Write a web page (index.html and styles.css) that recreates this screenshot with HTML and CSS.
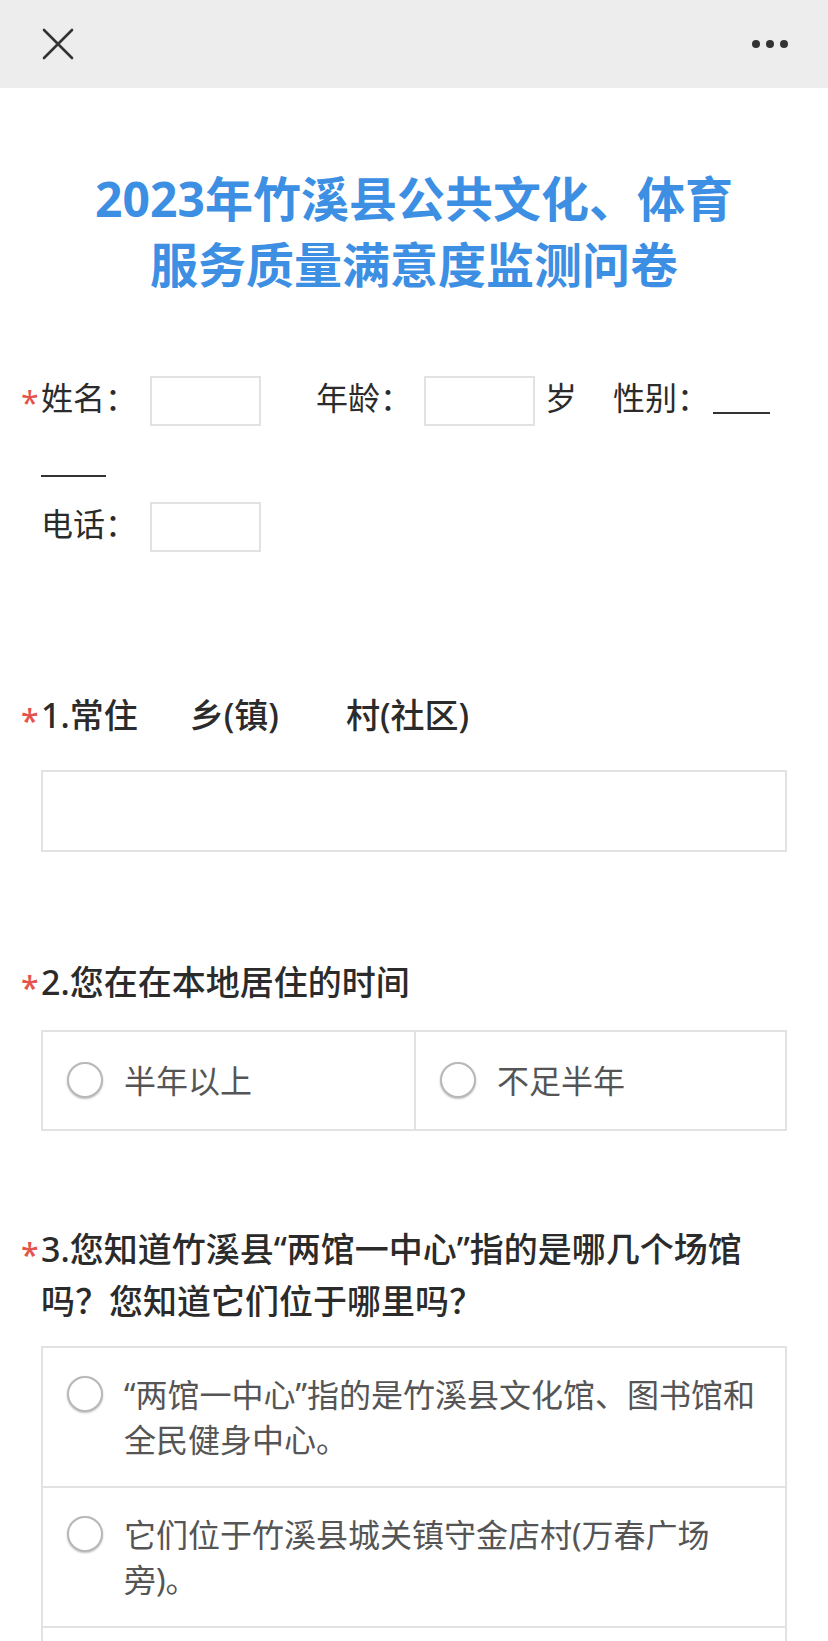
FILE: index.html
```html
<!DOCTYPE html>
<html lang="zh-CN">
<head>
  <meta charset="UTF-8">
  <meta name="viewport" content="width=device-width, initial-scale=1.0">
  <title>2023年竹溪县公共文化、体育服务质量满意度监测问卷</title>
  <link rel="stylesheet" href="styles.css">
</head>
<body>
  <header class="topbar">
    <button class="icon-btn close-btn" aria-label="关闭">
      <svg width="32" height="32" viewBox="0 0 32 32">
        <path d="M2 2 L30 30 M30 2 L2 30" stroke="#333" stroke-width="2.6" stroke-linecap="round" fill="none"/>
      </svg>
    </button>
    <button class="icon-btn more-btn" aria-label="更多">
      <span class="dot"></span><span class="dot"></span><span class="dot"></span>
    </button>
  </header>

  <main class="page">
    <h1 class="survey-title">2023年竹溪县公共文化、体育<br>服务质量满意度监测问卷</h1>

    <div class="info">
      <span class="req">*</span>姓名：<span class="field"></span><span class="gap-lg">年龄：</span><span class="field field-age"></span><span class="unit">岁</span><span class="gap-md">性别：</span><span class="blank blank-a"></span><br><span class="blank blank-b"></span><br>电话：<span class="field"></span>
    </div>

    <section class="question q-first">
      <div class="q-title"><span class="req">*</span>1.常住<span class="spacer spacer-a"></span>乡(镇)<span class="spacer spacer-b"></span>村(社区)</div>
      <div class="text-input"></div>
    </section>

    <section class="question q-second">
      <div class="q-title"><span class="req">*</span>2.您在在本地居住的时间</div>
      <div class="options options-row">
        <label class="option"><span class="radio"></span><span class="option-text">半年以上</span></label>
        <label class="option"><span class="radio"></span><span class="option-text">不足半年</span></label>
      </div>
    </section>

    <section class="question q-third">
      <div class="q-title"><span class="req">*</span>3.您知道竹溪县“两馆一中心”指的是哪几个场馆吗？您知道它们位于哪里吗？</div>
      <div class="options options-col">
        <label class="option"><span class="radio"></span><span class="option-text">“两馆一中心”指的是竹溪县文化馆、图书馆和全民健身中心。</span></label>
        <label class="option"><span class="radio"></span><span class="option-text">它们位于竹溪县城关镇守金店村(万春广场旁)。</span></label>
        <label class="option option-empty"><span class="radio"></span></label>
      </div>
    </section>
  </main>
</body>
</html>
```

FILE: styles.css
```css
:root {
  --text-color: #2b2b2b;
  --option-color: #555;
  --title-color: #3c8fe3;
  --border-color: #e2e2e2;
  --req-color: #e5534b;
  --font-family: "Noto Sans", "Noto Sans CJK SC", sans-serif;
}

html, body { margin: 0; padding: 0; }
body {
  font-family: var(--font-family);
  color: var(--text-color);
  background: #fff;
}

.topbar {
  height: 88px;
  background: #ededed;
  display: flex;
  align-items: center;
  justify-content: space-between;
  padding: 0 40px 0 42px;
}

.icon-btn {
  border: 0;
  background: none;
  padding: 0;
  display: flex;
  align-items: center;
}
.more-btn { gap: 6px; }
.dot {
  width: 8px;
  height: 8px;
  border-radius: 50%;
  background: #333;
}

.page { padding: 0 41px 40px; }

.survey-title {
  margin: 78px 0 0;
  font-size: 48px;
  line-height: 66px;
  font-weight: 700;
  text-align: center;
  color: var(--title-color);
}

.info {
  margin-top: 68px;
  font-size: 32px;
  line-height: 63px;
  color: var(--text-color);
}
.field {
  display: inline-block;
  width: 107px;
  height: 46px;
  border: 2px solid var(--border-color);
  vertical-align: middle;
  margin-left: 13px;
}
.field-age { margin-left: 12px; }
.gap-lg { margin-left: 55px; }
.unit { margin-left: 10px; }
.gap-md { margin-left: 36px; }
.blank {
  display: inline-block;
  height: 0;
  border-bottom: 2px solid #333;
  vertical-align: -4px;
}
.blank-a { width: 57px; margin-left: 4px; }
.blank-b { width: 65px; }

.req {
  display: inline-block;
  width: 20px;
  margin-left: -20px;
  color: var(--req-color);
  font-size: 32px;
  vertical-align: -5px;
  line-height: 1;
}

.question { margin-top: 100px; }
.q-first { margin-top: 134px; }
.q-second { margin-top: 104px; }
.q-third { margin-top: 92px; }

.q-title {
  font-size: 34px;
  line-height: 52px;
  font-weight: 500;
  color: var(--text-color);
  padding-right: 22px;
}
.spacer { display: inline-block; }
.spacer-a { width: 52px; }
.spacer-b { width: 67px; }

.text-input {
  margin-top: 29px;
  height: 78px;
  border: 2px solid var(--border-color);
}

.options {
  margin-top: 19px;
  border: 2px solid var(--border-color);
}
.q-second .options { margin-top: 22px; }
.options-row { display: grid; grid-template-columns: 1fr 1fr; }
.options-row .option { padding-top: 26px; padding-bottom: 26px; }
.options-row .option + .option { border-left: 2px solid var(--border-color); }
.options-col { display: flex; flex-direction: column; }
.options-col .option + .option { border-top: 2px solid var(--border-color); }

.option {
  display: flex;
  align-items: flex-start;
  padding: 24px 14px 24px 24px;
  font-size: 32px;
  line-height: 45px;
  color: var(--option-color);
}
.option-empty { min-height: 45px; }
.radio {
  flex: none;
  width: 32px;
  height: 32px;
  margin: 4px 21px 0 0;
  border: 2px solid #b8b8b8;
  border-radius: 50%;
  background: #fff;
  box-shadow: 0 1px 2px rgba(0, 0, 0, 0.25);
}
.option-text { flex: 1; }
```
